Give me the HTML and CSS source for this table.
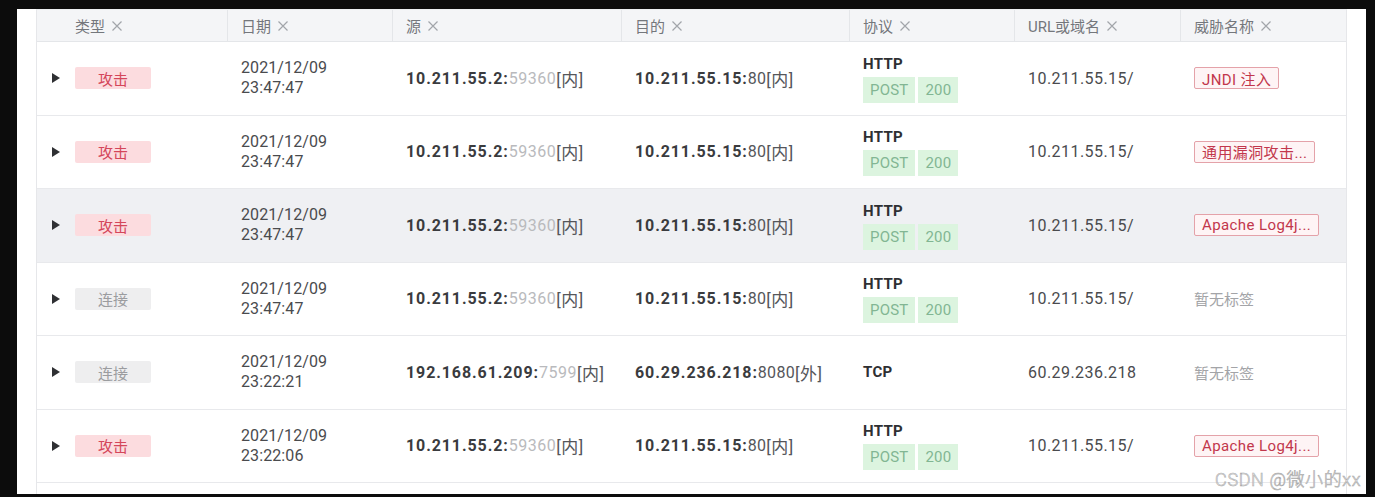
FILE: index.html
```html
<!DOCTYPE html>
<html lang="zh-CN">
<head>
<meta charset="utf-8">
<title>事件列表</title>
<link rel="stylesheet" href="styles.css">
</head>
<body>
<div class="panel">
  <div class="table">
    <div class="row head">
      <div class="cell first"><span class="hd">类型<svg class="x" viewBox="0 0 12 12"><path d="M1.5 1.5L10.5 10.5M10.5 1.5L1.5 10.5"/></svg></span></div>
      <div class="cell"><span class="hd">日期<svg class="x" viewBox="0 0 12 12"><path d="M1.5 1.5L10.5 10.5M10.5 1.5L1.5 10.5"/></svg></span></div>
      <div class="cell"><span class="hd">源<svg class="x" viewBox="0 0 12 12"><path d="M1.5 1.5L10.5 10.5M10.5 1.5L1.5 10.5"/></svg></span></div>
      <div class="cell"><span class="hd">目的<svg class="x" viewBox="0 0 12 12"><path d="M1.5 1.5L10.5 10.5M10.5 1.5L1.5 10.5"/></svg></span></div>
      <div class="cell"><span class="hd">协议<svg class="x" viewBox="0 0 12 12"><path d="M1.5 1.5L10.5 10.5M10.5 1.5L1.5 10.5"/></svg></span></div>
      <div class="cell"><span class="hd">URL或域名<svg class="x" viewBox="0 0 12 12"><path d="M1.5 1.5L10.5 10.5M10.5 1.5L1.5 10.5"/></svg></span></div>
      <div class="cell"><span class="hd">威胁名称<svg class="x" viewBox="0 0 12 12"><path d="M1.5 1.5L10.5 10.5M10.5 1.5L1.5 10.5"/></svg></span></div>
    </div>

    <div class="row">
      <div class="cell first"><span class="caret"></span><span class="type attack">攻击</span></div>
      <div class="cell date">2021/12/09<br>23:47:47</div>
      <div class="cell addr"><b>10.211.55.2:</b><span class="port">59360</span><span class="zone">[内]</span></div>
      <div class="cell addr"><b>10.211.55.15:</b>80<span class="zone">[内]</span></div>
      <div class="cell proto"><div class="pname">HTTP</div><div class="gtags"><span class="gtag">POST</span><span class="gtag">200</span></div></div>
      <div class="cell url">10.211.55.15/</div>
      <div class="cell"><span class="threat">JNDI 注入</span></div>
    </div>

    <div class="row">
      <div class="cell first"><span class="caret"></span><span class="type attack">攻击</span></div>
      <div class="cell date">2021/12/09<br>23:47:47</div>
      <div class="cell addr"><b>10.211.55.2:</b><span class="port">59360</span><span class="zone">[内]</span></div>
      <div class="cell addr"><b>10.211.55.15:</b>80<span class="zone">[内]</span></div>
      <div class="cell proto"><div class="pname">HTTP</div><div class="gtags"><span class="gtag">POST</span><span class="gtag">200</span></div></div>
      <div class="cell url">10.211.55.15/</div>
      <div class="cell"><span class="threat">通用漏洞攻击...</span></div>
    </div>

    <div class="row hover">
      <div class="cell first"><span class="caret"></span><span class="type attack">攻击</span></div>
      <div class="cell date">2021/12/09<br>23:47:47</div>
      <div class="cell addr"><b>10.211.55.2:</b><span class="port">59360</span><span class="zone">[内]</span></div>
      <div class="cell addr"><b>10.211.55.15:</b>80<span class="zone">[内]</span></div>
      <div class="cell proto"><div class="pname">HTTP</div><div class="gtags"><span class="gtag">POST</span><span class="gtag">200</span></div></div>
      <div class="cell url">10.211.55.15/</div>
      <div class="cell"><span class="threat">Apache Log4j...</span></div>
    </div>

    <div class="row">
      <div class="cell first"><span class="caret"></span><span class="type conn">连接</span></div>
      <div class="cell date">2021/12/09<br>23:47:47</div>
      <div class="cell addr"><b>10.211.55.2:</b><span class="port">59360</span><span class="zone">[内]</span></div>
      <div class="cell addr"><b>10.211.55.15:</b>80<span class="zone">[内]</span></div>
      <div class="cell proto"><div class="pname">HTTP</div><div class="gtags"><span class="gtag">POST</span><span class="gtag">200</span></div></div>
      <div class="cell url">10.211.55.15/</div>
      <div class="cell none">暂无标签</div>
    </div>

    <div class="row">
      <div class="cell first"><span class="caret"></span><span class="type conn">连接</span></div>
      <div class="cell date">2021/12/09<br>23:22:21</div>
      <div class="cell addr"><b>192.168.61.209:</b><span class="port">7599</span><span class="zone">[内]</span></div>
      <div class="cell addr"><b>60.29.236.218:</b>8080<span class="zone">[外]</span></div>
      <div class="cell proto"><div class="pname">TCP</div></div>
      <div class="cell url">60.29.236.218</div>
      <div class="cell none">暂无标签</div>
    </div>

    <div class="row">
      <div class="cell first"><span class="caret"></span><span class="type attack">攻击</span></div>
      <div class="cell date">2021/12/09<br>23:22:06</div>
      <div class="cell addr"><b>10.211.55.2:</b><span class="port">59360</span><span class="zone">[内]</span></div>
      <div class="cell addr"><b>10.211.55.15:</b>80<span class="zone">[内]</span></div>
      <div class="cell proto"><div class="pname">HTTP</div><div class="gtags"><span class="gtag">POST</span><span class="gtag">200</span></div></div>
      <div class="cell url">10.211.55.15/</div>
      <div class="cell"><span class="threat">Apache Log4j...</span></div>
    </div>

    <div class="row"></div>
  </div>
</div>
<div class="watermark">CSDN @微小的xx</div>
</body>
</html>
```

FILE: styles.css
```css
* { box-sizing: border-box; }

html, body {
  margin: 0;
  padding: 0;
  background: #0c0c0c;
  height: 497px;
  overflow: hidden;
}

body {
  position: relative;
  font-family: Roboto, "Noto Sans CJK SC", sans-serif;
  color: #444;
}

.panel {
  margin: 9px 0 0 17px;
  width: 1349px;
  height: 485px;
  background: #fff;
  padding: 0 19px;
  overflow: hidden;
}

.table {
  border-left: 1px solid #e6e7ea;
  border-right: 1px solid #e6e7ea;
  border-top: 1px solid #eceef1;
}

.row {
  display: grid;
  grid-template-columns: 191px 165px 229px 228px 165px 166px 165px;
  height: 73.5px;
  border-bottom: 1px solid #e8e9ec;
}

.row.hover { background: #eff0f3; }

.row.head {
  height: 32px;
  background: #f4f5f7;
  border-bottom: 1px solid #e4e6e9;
}

.cell {
  display: flex;
  align-items: center;
  padding-left: 13px;
  font-size: 16px;
  min-width: 0;
  white-space: nowrap;
}

.head .cell {
  border-right: 1px solid #e4e6e9;
  font-size: 15px;
  color: #74777c;
}
.head .cell:last-child { border-right: none; }
.head .cell.first { padding-left: 38px; }

.hd {
  display: inline-flex;
  align-items: center;
}

.x {
  width: 12px;
  height: 12px;
  margin-left: 6px;
  fill: none;
  stroke: #a2a5aa;
  stroke-width: 1.2;
}

.cell.first { padding-left: 15px; }

.caret {
  width: 0;
  height: 0;
  border-top: 5px solid transparent;
  border-bottom: 5px solid transparent;
  border-left: 8px solid #2f3033;
  margin-right: 15px;
}

.type {
  display: inline-flex;
  align-items: center;
  justify-content: center;
  width: 76px;
  height: 22px;
  font-size: 15px;
  border-radius: 2px;
}
.type.attack { background: #fcdcdf; color: #d4465a; }
.type.conn { background: #eeeeef; color: #9b9c9f; }

.date {
  line-height: 20px;
  color: #4a4b4e;
  letter-spacing: 0.1px;
}

.addr { color: #55565a; letter-spacing: 0.3px; }
.addr b { font-weight: 700; color: #3a3b3e; letter-spacing: 0.9px; }
.port { color: #b9babd; letter-spacing: 0.5px; }
.zone { font-size: 17px; color: #55565a; letter-spacing: 0.5px; }

.proto {
  flex-direction: column;
  align-items: flex-start;
  justify-content: center;
}
.pname {
  font-weight: 700;
  font-size: 15px;
  line-height: 20px;
  color: #2e2f32;
  letter-spacing: 0.3px;
}
.gtags {
  display: flex;
  gap: 3px;
  margin-top: 3px;
}
.gtag {
  display: inline-flex;
  align-items: center;
  height: 26px;
  padding: 0 7px;
  background: #dcf4df;
  color: #82b693;
  font-size: 15px;
  letter-spacing: 0.2px;
}

.url { color: #4a4b4e; letter-spacing: 0.45px; }

.threat {
  display: inline-flex;
  align-items: center;
  height: 22px;
  padding: 0 7px;
  border: 1px solid #e4a2a9;
  background: #fef4f5;
  color: #c2374c;
  font-size: 15px;
  border-radius: 2px;
  letter-spacing: 0.4px;
}

.none { color: #a3a4a7; font-size: 15px; }

.watermark {
  position: absolute;
  right: 14px;
  top: 465px;
  font-size: 18px;
  font-weight: 300;
  color: rgba(255, 255, 255, 0.9);
  -webkit-text-stroke: 0.6px #a8a8a8;
  letter-spacing: 0.6px;
}
```
